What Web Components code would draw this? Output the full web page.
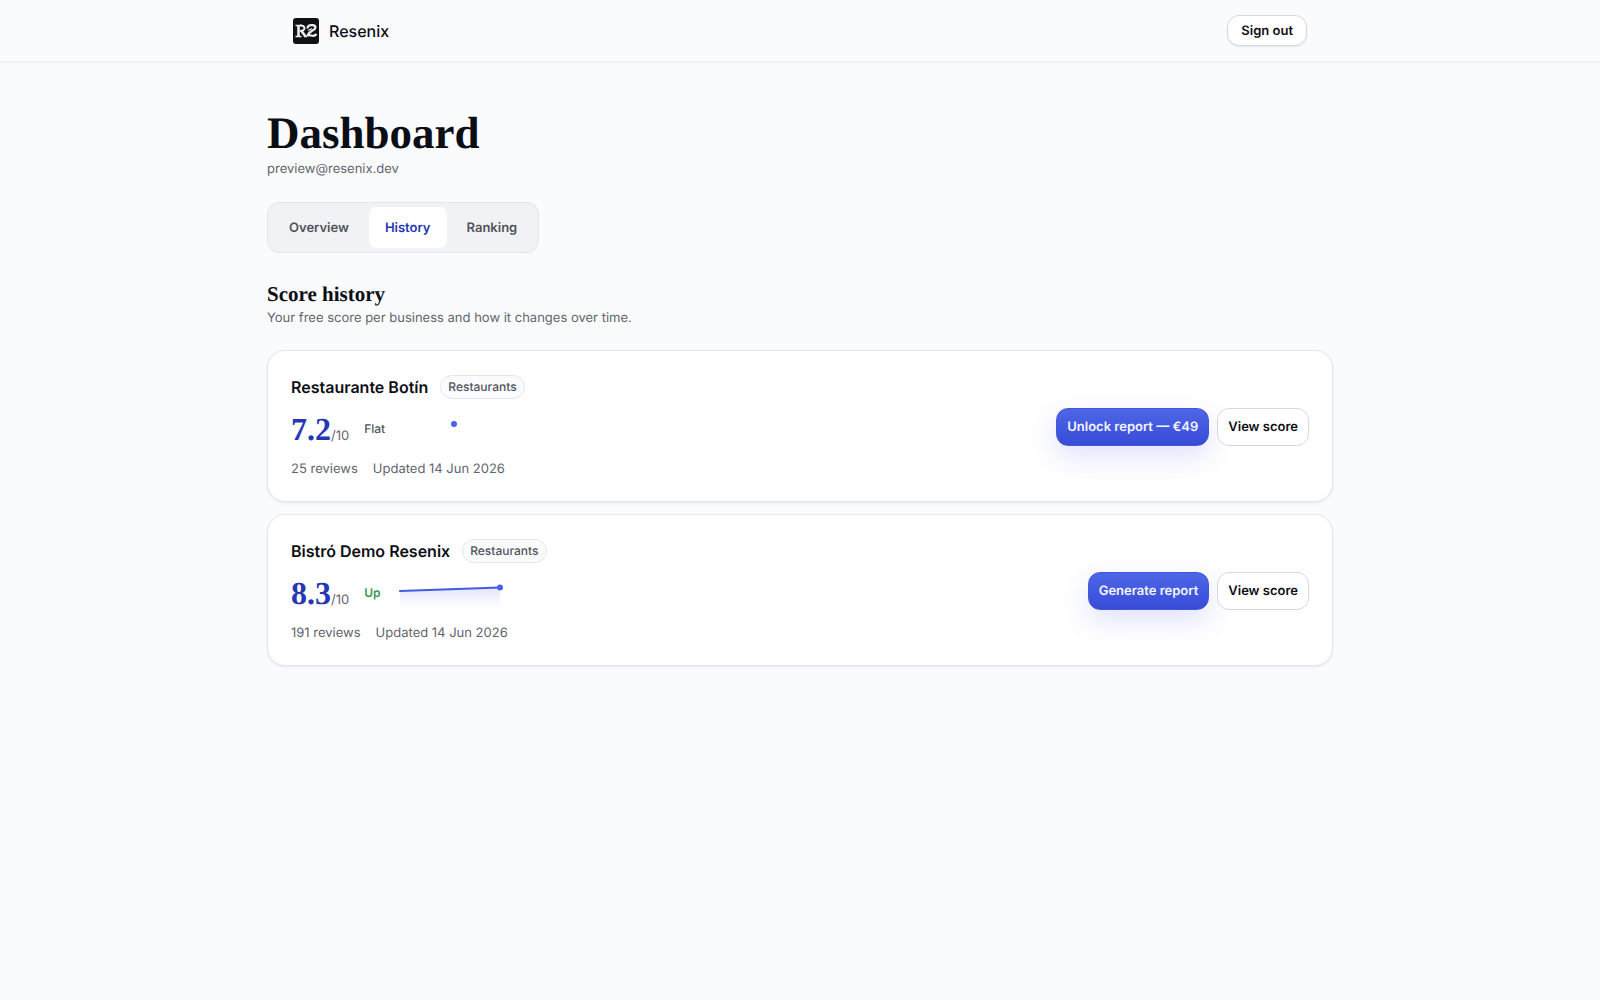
<!DOCTYPE html>
<html lang="en">
<head>
<meta charset="utf-8">
<meta name="viewport" content="width=device-width, initial-scale=1">
<title>Resenix Dashboard</title>
<style>
    :root {
        --bg: #fafbfd;
        --surface: #ffffff;
        --ink: #0c0e16;
        --muted: #62656d;
        --border: #e4e6ec;
        --border-strong: #d6d8de;
        --brand: #3d52dd;
        --brand-dark: #2637b5;
        --display: "Liberation Serif", serif;
    }

    body {
        margin: 0;
        background: var(--bg);
        color: var(--ink);
        font: 400 13px/20px Inter, sans-serif;
        text-rendering: geometricPrecision;
    }

    main {
        max-width: 1066px;
        margin: 0 auto;
        padding: 48px 24px;
    }

    .cards {
        display: flex;
        flex-direction: column;
        gap: 12px;
    }
</style>
</head>
<body>
<site-header>Resenix</site-header>
<main>
    <page-title heading="Dashboard">preview@resenix.dev</page-title>
    <tab-bar tabs="Overview,History,Ranking" active="History"></tab-bar>
    <section-heading heading="Score history">Your free score per business and how it changes over time.</section-heading>
    <div class="cards">
        <score-card name="Restaurante Botín" category="Restaurants" score="7.2" trend="Flat" points="7.2" reviews="25 reviews" updated="Updated 14 Jun 2026">
            <ui-button slot="actions" variant="primary">Unlock report — €49</ui-button>
            <ui-button slot="actions">View score</ui-button>
        </score-card>
        <score-card name="Bistró Demo Resenix" category="Restaurants" score="8.3" trend="Up" points="8.1,8.3" reviews="191 reviews" updated="Updated 14 Jun 2026">
            <ui-button slot="actions" variant="primary">Generate report</ui-button>
            <ui-button slot="actions">View score</ui-button>
        </score-card>
    </div>
</main>

<script>
/**
 * UiButton Component
 * variant="primary" for the filled one, size="small" for the header.
 */
class UiButton extends HTMLElement {
    constructor() {
        super();
        this.attachShadow({ mode: "open" });
    }

    connectedCallback() {
        this.shadowRoot.innerHTML = `
            <style>
                :host { display: block; }

                button {
                    display: block;
                    box-sizing: border-box;
                    height: 38px;
                    padding: 0 10px;
                    border: 1px solid var(--border-strong);
                    border-radius: 12px;
                    background: var(--surface);
                    color: var(--ink);
                    font: inherit;
                    font-weight: 600;
                    text-rendering: inherit;
                    white-space: nowrap;
                    cursor: pointer;
                }

                :host([size="small"]) button {
                    height: 31px;
                    padding: 0 13px;
                    box-shadow: 0 1px 2px rgba(12, 14, 22, 0.08);
                }

                :host([variant="primary"]) button {
                    border-color: #4257de;
                    background: linear-gradient(#4e66e6, #384bd8);
                    color: #f4f5ff;
                    box-shadow: 0 10px 28px rgba(79, 90, 235, 0.18);
                }
            </style>
            <button type="button"><slot></slot></button>
        `;
    }
}

/**
 * SiteHeader Component
 * Top bar with the brand and the sign out button.
 */
class SiteHeader extends HTMLElement {
    constructor() {
        super();
        this.attachShadow({ mode: "open" });
    }

    connectedCallback() {
        this.shadowRoot.innerHTML = `
            <style>
                :host {
                    display: block;
                    border-bottom: 2px solid #f1f2f5;
                }

                header {
                    display: flex;
                    align-items: center;
                    justify-content: space-between;
                    box-sizing: border-box;
                    max-width: 1066px;
                    min-height: 61px;
                    margin: 0 auto;
                    padding: 0 26px;
                }

                a {
                    display: flex;
                    align-items: center;
                    gap: 10px;
                    color: inherit;
                    font-size: 16px;
                    font-weight: 500;
                    text-decoration: none;
                }
            </style>
            <header>
                <a href="#">
                    <svg width="26" height="26" viewBox="0 0 26 26" fill="none" aria-hidden="true">
                        <rect width="26" height="26" rx="3" fill="#111213"/>
                        <g stroke="#eeeeee">
                            <path d="M2.500 7.500H9M2.500 18.500H8.500M11 18.500H14" stroke-width="1.400"/>
                            <path d="M5.500 7V19" stroke-width="2.600"/>
                            <path d="M7 7.600C13 7 13 13 7 13" stroke-width="2"/>
                            <path d="M8.500 13L12.500 18.500" stroke-width="2.600"/>
                            <path d="M14.500 10.500C14.500 7.500 17 6.700 20 7.200C23.500 8 23 11 19.500 12.500C17 14 15 15 14.500 18.300" stroke-width="2.300"/>
                            <path d="M14.500 17.500C17.500 15.500 20 20.500 23.500 16" stroke-width="2.300"/>
                            <path d="M15 12.500L19 10.500" stroke-width="1.200"/>
                        </g>
                    </svg>
                    <span><slot></slot></span>
                </a>
                <ui-button size="small">Sign out</ui-button>
            </header>
        `;
    }
}

/**
 * PageTitle Component
 */
class PageTitle extends HTMLElement {
    constructor() {
        super();
        this.attachShadow({ mode: "open" });
    }

    connectedCallback() {
        this.shadowRoot.innerHTML = `
            <style>
                :host {
                    display: block;
                    margin-bottom: 23px;
                    color: var(--muted);
                }

                h1 {
                    margin: 0 0 4px;
                    color: var(--ink);
                    font: 700 45px/44px var(--display);
                }

                p { margin: 0; }
            </style>
            <h1>${this.getAttribute("heading")}</h1>
            <p><slot></slot></p>
        `;
    }
}

/**
 * TabBar Component
 * Takes its labels from a comma separated list.
 */
class TabBar extends HTMLElement {
    constructor() {
        super();
        this.attachShadow({ mode: "open" });
    }

    connectedCallback() {
        this.render();
        this.shadowRoot.addEventListener("click", (e) => {
            const tab = e.target.closest("button");
            if (!tab) return;
            this.setAttribute("active", tab.textContent);
            this.render();
        });
    }

    render() {
        const active = this.getAttribute("active");
        const tabs = this.getAttribute("tabs").split(",");

        this.shadowRoot.innerHTML = `
            <style>
                :host {
                    display: flex;
                    margin-bottom: 30px;
                }

                .tabs {
                    display: flex;
                    gap: 4px;
                    padding: 4px 5px;
                    border: 1px solid var(--border);
                    border-radius: 12px;
                    background: #f1f2f5;
                }

                button {
                    height: 41px;
                    padding: 0 16px;
                    border: 0;
                    border-radius: 8px;
                    background: none;
                    color: #50535b;
                    font: inherit;
                    font-weight: 600;
                    text-rendering: inherit;
                    cursor: pointer;
                }

                button[aria-selected="true"] {
                    background: var(--surface);
                    color: var(--brand-dark);
                }
            </style>
            <div class="tabs" role="tablist">
                ${tabs.map((t) => `<button type="button" role="tab" aria-selected="${t === active}">${t}</button>`).join("")}
            </div>
        `;
    }
}

/**
 * SectionHeading Component
 */
class SectionHeading extends HTMLElement {
    constructor() {
        super();
        this.attachShadow({ mode: "open" });
    }

    connectedCallback() {
        this.shadowRoot.innerHTML = `
            <style>
                :host {
                    display: block;
                    margin-bottom: 22px;
                    color: var(--muted);
                }

                h2 {
                    margin: 0 0 3px;
                    color: var(--ink);
                    font: 700 21px/22px var(--display);
                }

                p { margin: 0; }
            </style>
            <h2>${this.getAttribute("heading")}</h2>
            <p><slot></slot></p>
        `;
    }
}

/**
 * SparkLine Component
 * Small score chart, a lone value is drawn as a centred dot.
 */
class SparkLine extends HTMLElement {
    constructor() {
        super();
        this.attachShadow({ mode: "open" });
    }

    connectedCallback() {
        const values = this.getAttribute("points").split(",").map(Number);
        const first = values[0];
        const coords = values.map((v, i) => ({
            x: values.length === 1 ? 54 : 4 + (i * 100) / (values.length - 1),
            y: values.length === 1 ? 15 : 18 - (v - first) * 18
        }));
        const last = coords[coords.length - 1];
        const line = coords.map((c) => `${c.x},${c.y}`).join(" ");

        this.shadowRoot.innerHTML = `
            <style>
                :host, svg { display: block; }
            </style>
            <svg width="108" height="40" viewBox="0 0 108 40" aria-hidden="true">
                <defs>
                    <linearGradient id="fade" x1="0" y1="0" x2="0" y2="1">
                        <stop offset="0" stop-color="#4a62e6" stop-opacity="0.16"/>
                        <stop offset="1" stop-color="#4a62e6" stop-opacity="0"/>
                    </linearGradient>
                </defs>
                ${coords.length > 1 ? `
                    <polygon points="4,35 ${line} 104,35" fill="url(#fade)"/>
                    <polyline points="${line}" fill="none" stroke="#435be0" stroke-width="2" stroke-linecap="round"/>
                ` : ""}
                <circle cx="${last.x}" cy="${last.y}" r="3" fill="#4a62e6"/>
            </svg>
        `;
    }
}

/**
 * ScoreCard Component
 * One business with its score, trend and actions.
 */
class ScoreCard extends HTMLElement {
    constructor() {
        super();
        this.attachShadow({ mode: "open" });
    }

    connectedCallback() {
        const get = (name) => this.getAttribute(name);

        this.shadowRoot.innerHTML = `
            <style>
                :host { display: block; }

                article {
                    display: flex;
                    align-items: center;
                    justify-content: space-between;
                    gap: 24px;
                    padding: 24px 23px 22px;
                    border: 1px solid var(--border);
                    border-radius: 18px;
                    background: var(--surface);
                    box-shadow: 0 1px 3px rgba(12, 14, 22, 0.08);
                }

                .info {
                    display: flex;
                    flex-direction: column;
                    gap: 10px;
                }

                .top {
                    display: flex;
                    align-items: center;
                    gap: 12px;
                }

                h3 {
                    margin: 0;
                    font-size: 16px;
                    line-height: 24px;
                    font-weight: 600;
                }

                .tag {
                    padding: 0 7px;
                    border: 1px solid var(--border);
                    border-radius: 12px;
                    background: var(--bg);
                    color: #50535b;
                    font-size: 12px;
                    line-height: 22px;
                    font-weight: 500;
                }

                .result {
                    display: flex;
                    align-items: center;
                    gap: 15px;
                }

                .score {
                    display: flex;
                    align-items: baseline;
                    color: var(--muted);
                }

                .score strong {
                    color: var(--brand-dark);
                    font: 700 32px/40px var(--display);
                }

                .trend {
                    color: #50535b;
                    font-size: 12px;
                    font-weight: 500;
                }

                .trend.up {
                    color: #3a9a50;
                    font-weight: 600;
                }

                .meta {
                    display: flex;
                    gap: 15px;
                    color: var(--muted);
                }

                .actions {
                    display: flex;
                    gap: 8px;
                }
            </style>
            <article>
                <div class="info">
                    <div class="top">
                        <h3>${get("name")}</h3>
                        <span class="tag">${get("category")}</span>
                    </div>
                    <div class="result">
                        <div class="score"><strong>${get("score")}</strong><span>/10</span></div>
                        <span class="trend ${get("trend").toLowerCase()}">${get("trend")}</span>
                        <spark-line points="${get("points")}"></spark-line>
                    </div>
                    <div class="meta">
                        <span>${get("reviews")}</span>
                        <span>${get("updated")}</span>
                    </div>
                </div>
                <div class="actions"><slot name="actions"></slot></div>
            </article>
        `;
    }
}

customElements.define("ui-button", UiButton);
customElements.define("site-header", SiteHeader);
customElements.define("page-title", PageTitle);
customElements.define("tab-bar", TabBar);
customElements.define("section-heading", SectionHeading);
customElements.define("spark-line", SparkLine);
customElements.define("score-card", ScoreCard);
</script>
</body>
</html>
